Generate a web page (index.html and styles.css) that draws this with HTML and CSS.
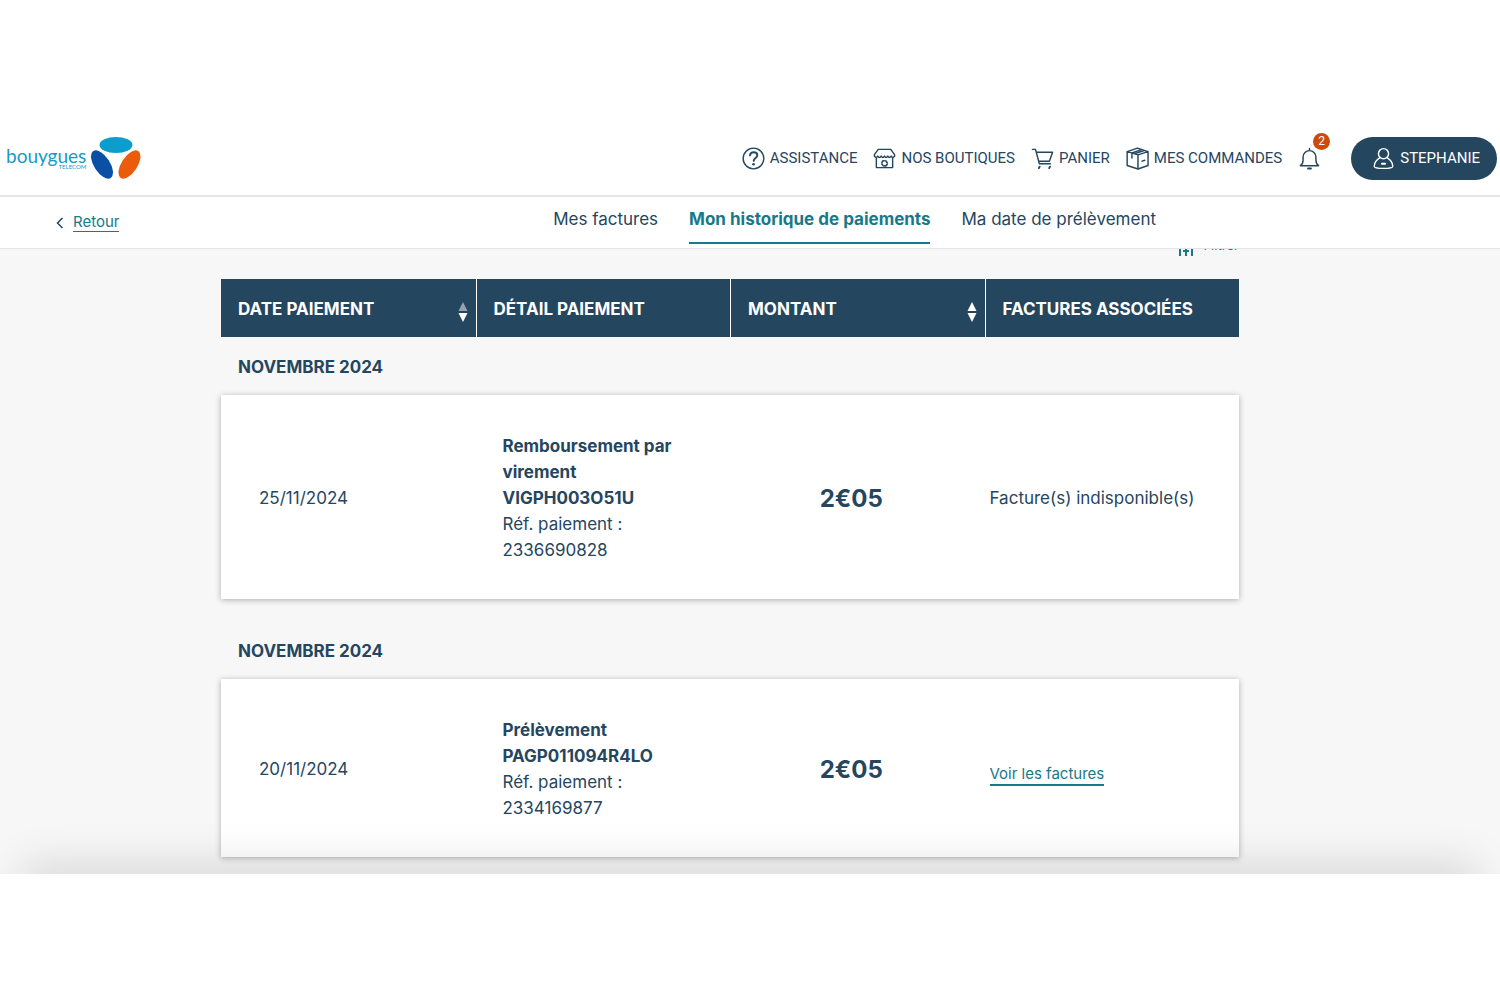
FILE: index.html
```html
<!DOCTYPE html>
<html lang="fr">
<head>
<meta charset="utf-8">
<meta name="viewport" content="width=device-width, initial-scale=1">
<title>Mon historique de paiements</title>
<link rel="stylesheet" href="styles.css">
</head>
<body>
<header class="topbar">
  <a class="logo" href="#" aria-label="Bouygues Telecom">
    <span class="logo-text"><span class="logo-name">bouygues</span><span class="logo-sub">TELECOM</span></span>
    <svg class="logo-mark" viewBox="0 0 52 44" aria-hidden="true">
      <ellipse cx="26" cy="9" rx="16.500" ry="8" fill="#0b9dcc"/>
      <ellipse cx="12" cy="28.500" rx="8" ry="16" transform="rotate(-33 12 28.500)" fill="#0a50a4"/>
      <ellipse cx="39.500" cy="28.500" rx="8" ry="16" transform="rotate(33 39.500 28.500)" fill="#ea5b0c"/>
    </svg>
  </a>
  <nav class="tools" aria-label="Services">
    <a class="tool" href="#">
      <svg class="icon" viewBox="0 0 24 24" aria-hidden="true"><circle cx="12" cy="12" r="10.800"/><path d="M8.300 8.800C8.600 6.700 10 5.500 12.200 5.500s3.800 1.300 3.800 3.200c0 2.800-3.600 2.900-3.800 5.800" stroke-width="2"/><circle class="dot" cx="12" cy="18" r="1.400"/></svg>
      ASSISTANCE</a>
    <a class="tool" href="#">
      <svg class="icon" viewBox="0 0 24 24" aria-hidden="true"><path d="M1.500 9.500V8l4-5.500h13l4 5.500v1.500"/><path d="M1.500 9.500q1.700 3 3.500 0q1.700 3 3.500 0q1.700 3 3.500 0q1.700 3 3.500 0q1.700 3 3.500 0q1.700 3 3.500 0M3.500 11.500v10h17v-10"/><path d="M9.200 16.300l1.300-1.900h1.200M13.300 14.400l1.500 2M14.800 18l-1.200 1.700h-1.400M10.700 19.700L9.300 17.800" stroke-width="1.700"/></svg>
      NOS BOUTIQUES</a>
    <a class="tool" href="#">
      <svg class="icon" viewBox="0 0 24 24" aria-hidden="true"><path d="M1.500 2.500h3.200l4 15h11.500M5.500 5.500h17l-3.300 9.300H8"/><path d="M9 20.500l-.8 1.500M19.800 20.500l-.8 1.500" stroke-width="2"/></svg>
      PANIER</a>
    <a class="tool" href="#">
      <svg class="icon" viewBox="0 0 24 24" aria-hidden="true"><path d="M1.200 4.800L12.500 8.200 23 4.800v14.500l-10.500 3.700L1.200 19.300zM12.500 8.200V23M1.200 4.800L12 1.200l11 3.600M6.200 11.500V6.300l10-3.600M8.800 7.100l10-3.500M16.800 14.800l2.800-1"/></svg>
      MES COMMANDES</a>
    <button class="bell" type="button" aria-label="Notifications">
      <svg class="icon" viewBox="0 0 24 24" aria-hidden="true"><path d="M12 1.500v2M2.500 19.500c2-1.300 2.800-3 2.800-6v-3a6.700 6.700 0 0 1 13.400 0v3c0 3 .8 4.700 2.800 6z"/><path d="M10.500 22.500h3" stroke-width="2"/></svg>
      <span class="badge">2</span>
    </button>
  </nav>
  <button class="account" type="button">
    <svg class="icon" viewBox="0 0 24 24" aria-hidden="true"><circle cx="12" cy="7" r="5.300"/><path d="M8.300 11C5 13 2.500 16.500 2.300 20q0 2.300 9.700 2.300t9.700-2.300c-.2-3.500-2.700-7-6-9"/><path d="M10.300 17.500h3.400" stroke-width="2"/></svg>
    STEPHANIE</button>
</header>

<div class="subnav">
  <a class="back" href="#">
    <svg class="chevron" viewBox="0 0 8 12" aria-hidden="true"><path d="M6.500 1L1.500 6l5 5"/></svg>
    <span class="back-label">Retour</span></a>
  <nav class="tabs" aria-label="Factures et paiements">
    <a class="tab" href="#">Mes factures</a>
    <a class="tab tab-active" href="#" aria-current="page">Mon historique de paiements</a>
    <a class="tab" href="#">Ma date de prélèvement</a>
  </nav>
</div>

<main class="content">
  <div class="history">
    <div class="filters">
      <button class="filter" type="button">
        <svg class="filter-icon" viewBox="0 0 18 24" aria-hidden="true"><path d="M3 1v22M9 1v22M15 1v22M1 8h4M6 18h6M13 8h4"/></svg>
        Filtrer</button>
    </div>
    <table class="payments">
      <thead>
        <tr class="head-row">
          <th scope="col">DATE PAIEMENT
            <button class="sort" type="button" aria-label="Trier par date"><svg viewBox="0 0 10 22" aria-hidden="true"><path class="dim" d="M5 1l4.500 9h-9z"/><path d="M5 21L.5 12h9z"/></svg></button></th>
          <th scope="col">DÉTAIL PAIEMENT</th>
          <th scope="col">MONTANT
            <button class="sort" type="button" aria-label="Trier par montant"><svg viewBox="0 0 10 22" aria-hidden="true"><path d="M5 1l4.500 9h-9z"/><path d="M5 21L.5 12h9z"/></svg></button></th>
          <th scope="col">FACTURES ASSOCIÉES</th>
        </tr>
      </thead>
      <tbody>
        <tr class="month-row"><th scope="rowgroup" colspan="4">NOVEMBRE 2024</th></tr>
        <tr class="card-row">
          <td class="date">25/11/2024</td>
          <td class="detail"><strong>Remboursement par<br>virement<br>VIGPH003O51U</strong><br>Réf. paiement :<br>2336690828</td>
          <td class="amount">2€05</td>
          <td class="bills">Facture(s) indisponible(s)</td>
        </tr>
      </tbody>
      <tbody>
        <tr class="month-row"><th scope="rowgroup" colspan="4">NOVEMBRE 2024</th></tr>
        <tr class="card-row">
          <td class="date">20/11/2024</td>
          <td class="detail"><strong>Prélèvement<br>PAGP011094R4LO</strong><br>Réf. paiement :<br>2334169877</td>
          <td class="amount">2€05</td>
          <td class="bills"><a class="bills-link" href="#">Voir les factures</a></td>
        </tr>
      </tbody>
    </table>
  </div>
</main>
</body>
</html>
```
FILE: styles.css
```css
* { box-sizing: border-box; }

body {
  margin: 0;
  padding: 121px 0;
  background: #fff;
  color: #25465f;
  font: 17px/26px Inter, "Liberation Sans", sans-serif;
}

a { color: inherit; text-decoration: none; }

button {
  margin: 0;
  padding: 0;
  border: 0;
  background: none;
  color: inherit;
  font: inherit;
  cursor: pointer;
}

.topbar {
  display: flex;
  align-items: center;
  height: 76px;
  padding: 0 3px 0 6px;
  border-bottom: 2px solid #e6e6e6;
}

.logo { display: flex; align-items: center; gap: 4px; }
.logo-text { display: flex; flex-direction: column; align-items: flex-end; }
.logo-name { color: #159bc4; font: 19px/20px Lato, sans-serif; }
.logo-sub { margin-top: -2px; color: #159bc4; font: 6px/6px Lato, sans-serif; }
.logo-mark { width: 52px; height: 44px; }

.tools {
  display: flex;
  align-items: center;
  gap: 16px;
  margin-left: auto;
  font: 15px/26px Roboto, sans-serif;
}

.tool { display: flex; align-items: center; gap: 5px; }

.icon {
  width: 23px;
  height: 23px;
  fill: none;
  stroke: currentColor;
  stroke-width: 1.5;
  stroke-linejoin: round;
  stroke-linecap: round;
}
.icon .dot { fill: currentColor; stroke: none; }

.bell { position: relative; display: flex; }
.badge {
  position: absolute;
  top: -14px;
  right: -9px;
  width: 17px;
  height: 17px;
  border-radius: 50%;
  background: #cb4a0c;
  color: #fff;
  font-size: 12px;
  line-height: 17px;
  text-align: center;
}

.account {
  display: flex;
  align-items: center;
  gap: 5px;
  height: 43px;
  margin-left: 30px;
  padding: 0 17px 0 21px;
  border-radius: 22px;
  background: #25465f;
  color: #fff;
  font: 15px/26px Roboto, sans-serif;
}

.subnav {
  display: grid;
  grid-template-columns: 1fr auto;
  height: 52px;
  padding-right: 344px;
  border-bottom: 1px solid #e4e4e4;
}

.back {
  display: flex;
  align-items: center;
  gap: 9px;
  padding-left: 56px;
  color: #17798a;
  font-size: 15px;
}
.back-label { border-bottom: 1px solid #17798a; line-height: 18px; }
.chevron {
  width: 8px;
  height: 12px;
  fill: none;
  stroke: #25465f;
  stroke-width: 1.5;
}

.tabs { display: flex; gap: 31px; }
.tab { height: 47px; padding-top: 9px; }
.tab-active {
  border-bottom: 2px solid #17798a;
  color: #17798a;
  font-weight: 700;
}

.content {
  position: relative;
  overflow: hidden;
  padding: 0 261px 17px 221px;
  background: #f7f7f7;
}

/* Soft shade along the lower edge of the scrolling area */
.content::after {
  content: "";
  position: absolute;
  right: 30px;
  bottom: -20px;
  left: 30px;
  height: 20px;
  box-shadow: 0 0 44px 8px rgba(0, 0, 0, 0.15);
  pointer-events: none;
}

/* The filter line is scrolled partly under the navigation */
.filters {
  display: flex;
  justify-content: flex-end;
  height: 46px;
  margin-top: -16px;
}
.filter {
  display: flex;
  align-items: flex-start;
  gap: 8px;
  height: 24px;
  color: #17798a;
  font-size: 13px;
  line-height: 24px;
}
.filter-icon {
  width: 18px;
  height: 24px;
  fill: none;
  stroke: currentColor;
  stroke-width: 2;
}

.payments { display: block; }
.payments thead, .payments tbody { display: block; }
.payments th, .payments td { padding: 0; text-align: left; }

.head-row, .card-row {
  display: grid;
  grid-template-columns: repeat(4, 1fr);
}

.head-row { background: #25465f; color: #fff; }
.payments .head-row th {
  display: flex;
  align-items: center;
  justify-content: space-between;
  height: 58px;
  padding: 2px 8px 0 17px;
}
.head-row th + th { border-left: 1px solid #fff; }

.sort { display: flex; padding-top: 6px; }
.sort svg { width: 10px; height: 22px; fill: #fff; }
.sort .dim { fill: #93a3b0; }

.month-row { display: block; }
.payments .month-row th { display: block; padding: 17px 17px 15px; }
tbody + tbody .month-row { padding-top: 22px; }

.card-row {
  align-items: center;
  padding: 38px 0 36px;
  background: #fff;
  box-shadow: 0 1px 6px rgba(0, 0, 0, 0.3);
}
.payments .date { padding-left: 38px; }
.payments .detail { padding-left: 27px; }
.payments .amount {
  padding: 2px 12px 0 0;
  font-size: 24px;
  font-weight: 700;
  text-align: center;
}
.payments .bills { padding-left: 5px; }
.bills-link {
  display: inline-block;
  margin-top: 12px;
  border-bottom: 2px solid #17798a;
  color: #17798a;
  font-size: 15px;
  line-height: 20px;
}
```
